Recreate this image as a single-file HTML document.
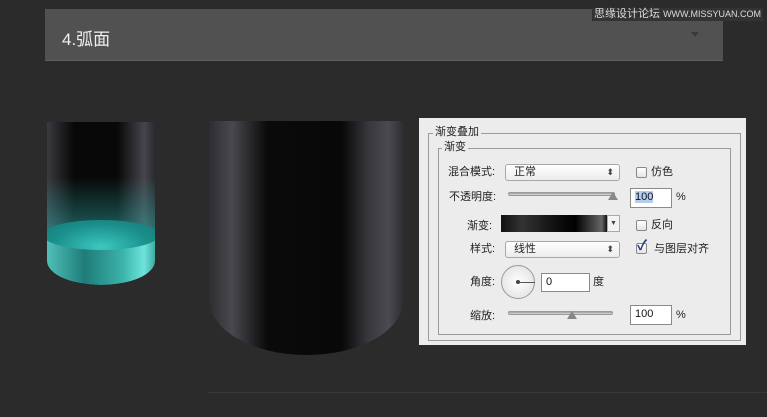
<!DOCTYPE html>
<html><head><meta charset="utf-8"><style>
*{margin:0;padding:0;box-sizing:border-box}
body{width:767px;height:417px;background:#2b2b2b;position:relative;overflow:hidden;font-family:"Liberation Sans","Noto Sans CJK SC",sans-serif}
.a{position:absolute}
.lbl{position:absolute;font-size:11px;color:#222;line-height:13px;white-space:nowrap}
.sel{position:absolute;background:linear-gradient(#fff,#ececec);border:1px solid #a8a8a8;border-radius:3px;font-size:11px;color:#222;padding-left:8px;line-height:15px}
.sel:after{content:"⬍";position:absolute;right:5px;top:0;font-size:9px;color:#444}
.cb{position:absolute;width:11px;height:11px;border:1px solid #888;border-radius:2px;background:linear-gradient(#fff,#e4e4e4)}
.inp{position:absolute;background:#fff;border:1px solid #8a8a8a;font-size:11px;padding-left:4px;line-height:17px;color:#111}
.track{position:absolute;height:4px;border-radius:2px;background:linear-gradient(#999,#ddd);border:1px solid #999}
.thumb{position:absolute;width:0;height:0;border-left:5px solid transparent;border-right:5px solid transparent;border-bottom:8px solid #888}
</style></head><body>
<div class="a" style="left:45px;top:9px;width:678px;height:52px;background:#515151;border-bottom:1px solid #606060"></div>
<div class="a" style="left:62px;top:25px;font-size:17px;color:#f0f0f0">4.弧面</div>
<div class="a" style="left:691px;top:32px;width:0;height:0;border-left:4px solid transparent;border-right:4px solid transparent;border-top:5px solid #3a3a3a"></div>
<div class="a" style="left:592px;top:8px;font-size:11px;color:#ddd;background:#333;line-height:13px;padding:0 2px;letter-spacing:0">思缘设计论坛 <span style="font-size:9px">WWW.MISSYUAN.COM</span></div>

<!-- small cylinder -->
<div class="a" style="left:47px;top:122px;width:108px;height:163px;border-radius:0 0 54px 54px/0 0 24px 24px;overflow:hidden;background:linear-gradient(90deg,#3a3a40,#080808 25%,#080808 65%,#45454c 90%,#2a2a2e)">
 <div class="a" style="left:0;top:55px;width:108px;height:60px;background:linear-gradient(rgba(50,180,175,0),rgba(50,180,175,0.55))"></div>
 <div class="a" style="left:0;top:112px;width:108px;height:51px;background:linear-gradient(90deg,#4fc0b8,#1f7c78 35%,#3bb3ab 70%,#6ee4dc 90%,#3fa9a2);border-radius:0 0 54px 54px/0 0 24px 24px"></div>
 <div class="a" style="left:-4px;top:98px;width:116px;height:30px;border-radius:50%;background:radial-gradient(ellipse at 50% 90%,#3cc8c0,#1a8e8a 60%,#157a76)"></div>
</div>
<!-- big cylinder -->
<div class="a" style="left:209px;top:121px;width:195px;height:234px;border-radius:0 0 97px 97px/0 0 56px 56px;background:linear-gradient(90deg,#2e2e32,#48484e 12%,#0a0a0a 30%,#080808 68%,#38383e 82%,#4a4a50 92%,#2c2c30)"></div>
<div class="a" style="left:208px;top:392px;width:559px;height:1px;background:#383838"></div>

<!-- panel -->
<div class="a" style="left:419px;top:118px;width:327px;height:227px;background:#ececec"></div>
<div class="a" style="left:428px;top:133px;width:313px;height:208px;border:1px solid #9a9a9a"></div>
<div class="lbl" style="left:433px;top:126px;background:#ececec;padding:0 2px">渐变叠加</div>
<div class="a" style="left:438px;top:148px;width:293px;height:187px;border:1px solid #9a9a9a"></div>
<div class="lbl" style="left:442px;top:141px;background:#ececec;padding:0 2px">渐变</div>

<div class="lbl" style="left:448px;top:166px">混合模式:</div>
<div class="sel" style="left:505px;top:164px;width:115px;height:17px">正常</div>
<div class="cb" style="left:636px;top:167px"></div><div class="lbl" style="left:651px;top:166px">仿色</div>

<div class="lbl" style="left:449px;top:191px">不透明度:</div>
<div class="track" style="left:508px;top:192px;width:107px"></div>
<div class="thumb" style="left:608px;top:192px"></div>
<div class="inp" style="left:630px;top:188px;width:42px;height:20px"><span style="background:#b5cdee">100</span></div>
<div class="lbl" style="left:676px;top:191px">%</div>

<div class="lbl" style="left:467px;top:220px">渐变:</div>
<div class="a" style="left:501px;top:215px;width:106px;height:17px;background:linear-gradient(90deg,#111,#333 20%,#111 50%,#000 70%,#666 95%,#111)"></div>
<div class="a" style="left:607px;top:215px;width:13px;height:17px;background:#f4f4f4;border:1px solid #aaa;font-size:7px;text-align:center;line-height:15px;color:#444">▼</div>
<div class="cb" style="left:636px;top:220px"></div><div class="lbl" style="left:651px;top:219px">反向</div>

<div class="lbl" style="left:470px;top:243px">样式:</div>
<div class="sel" style="left:505px;top:241px;width:115px;height:17px">线性</div>
<div class="cb" style="left:636px;top:243px"></div><div class="a" style="left:637px;top:237px;font-size:14px;line-height:16px;color:#1a3f7a;font-weight:bold">✓</div>
<div class="lbl" style="left:654px;top:243px">与图层对齐</div>

<div class="lbl" style="left:470px;top:276px">角度:</div>
<div class="a" style="left:501px;top:265px;width:34px;height:34px;border-radius:50%;border:1px solid #999;background:radial-gradient(#fff,#ddd)"></div>
<div class="a" style="left:518px;top:282px;width:17px;height:1px;background:#555"></div>
<div class="a" style="left:516px;top:280px;width:4px;height:4px;border-radius:50%;background:#444"></div>
<div class="inp" style="left:541px;top:273px;width:49px;height:19px">0</div>
<div class="lbl" style="left:593px;top:276px">度</div>

<div class="lbl" style="left:470px;top:310px">缩放:</div>
<div class="track" style="left:508px;top:311px;width:105px"></div>
<div class="thumb" style="left:567px;top:311px"></div>
<div class="inp" style="left:630px;top:305px;width:42px;height:20px">100</div>
<div class="lbl" style="left:676px;top:309px">%</div>
</body></html>
